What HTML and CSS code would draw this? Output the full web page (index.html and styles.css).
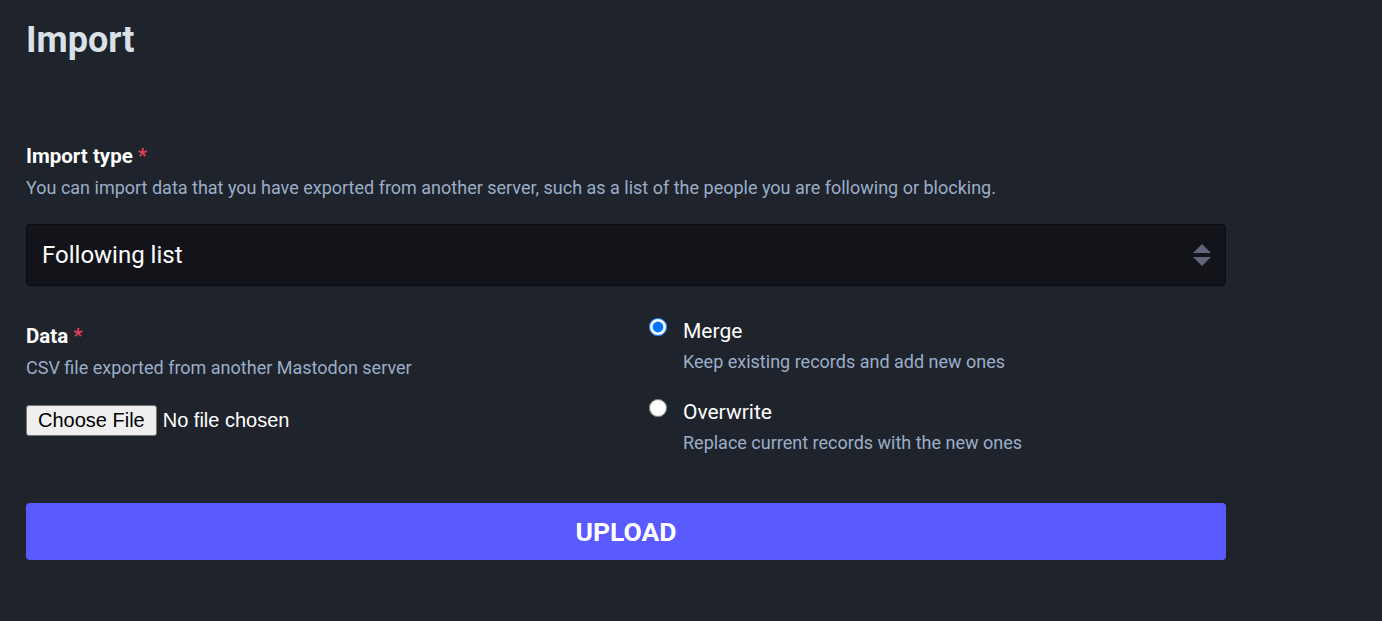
FILE: index.html
```html
<!DOCTYPE html>
<html lang="en">
<head>
<meta charset="utf-8">
<title>Import</title>
<link rel="stylesheet" href="styles.css">
</head>
<body>
<main class="page">
  <h2 class="title">Import</h2>
  <form class="form">
    <div class="field field-type">
      <div class="label">Import type <abbr class="req">*</abbr></div>
      <div class="hint">You can import data that you have exported from another server, such as a list of the people you are following or blocking.</div>
      <div class="select-wrap">
        <select class="select">
          <option>Following list</option>
        </select>
        <span class="arrows">
          <svg width="20" height="24" viewBox="0 0 20 24"><path d="M10 1 L19 10 H1 Z" fill="#5f6478"/><path d="M1 14 H19 L10 23 Z" fill="#5f6478"/></svg>
        </span>
      </div>
    </div>
    <div class="columns">
      <div class="col">
        <div class="label">Data <abbr class="req">*</abbr></div>
        <div class="hint">CSV file exported from another Mastodon server</div>
        <div class="file">
          <span class="file-btn">Choose File</span>
          <span class="file-text">No file chosen</span>
        </div>
      </div>
      <div class="col radios">
        <label class="radio">
          <input type="radio" name="mode" checked>
          <span class="radio-body">
            <span class="radio-label">Merge</span>
            <span class="radio-hint">Keep existing records and add new ones</span>
          </span>
        </label>
        <label class="radio">
          <input type="radio" name="mode">
          <span class="radio-body">
            <span class="radio-label">Overwrite</span>
            <span class="radio-hint">Replace current records with the new ones</span>
          </span>
        </label>
      </div>
    </div>
    <button type="button" class="upload">UPLOAD</button>
  </form>
</main>
</body>
</html>
```
FILE: styles.css
```css
html, body {
  margin: 0;
  padding: 0;
  background: #1f232b;
  height: 100%;
}
body {
  font-family: Roboto, "Noto Sans", sans-serif;
  color: #ffffff;
}
.page {
  padding: 0 26px;
  width: 1200px;
}
.title {
  margin: 0;
  padding-top: 18px;
  font-size: 36px;
  line-height: 44px;
  font-weight: 700;
  color: #d9e1e8;
}
.form {
  margin-top: 82px;
}
.label {
  font-size: 20.5px;
  line-height: 24px;
  font-weight: 700;
  color: #ffffff;
}
.req {
  color: #df405a;
  text-decoration: none;
  font-weight: 700;
}
.hint {
  margin-top: 9px;
  font-size: 18px;
  line-height: 22px;
  color: #9baec8;
}
.select-wrap {
  position: relative;
  margin-top: 25px;
}
.select {
  display: block;
  width: 100%;
  height: 62px;
  appearance: none;
  -webkit-appearance: none;
  background: #131419;
  border: 1px solid #0a0b0e;
  border-radius: 4px;
  color: #ffffff;
  font-family: Roboto, "Noto Sans", sans-serif;
  font-size: 24px;
  padding: 0 15px;
  outline: none;
}
.arrows {
  position: absolute;
  right: 14px;
  top: 19px;
  display: flex;
}
.columns {
  display: grid;
  grid-template-columns: 1fr 1fr;
  column-gap: 36px;
  margin-top: 33px;
}
.columns .col:first-child {
  padding-top: 5px;
}
.file {
  display: flex;
  align-items: center;
  margin-top: 26px;
  font-family: "Liberation Sans", Arial, sans-serif;
  font-size: 20px;
}
.file-btn {
  display: inline-block;
  box-sizing: border-box;
  height: 31px;
  line-height: 29px;
  padding: 0 11px;
  background: #efefef;
  color: #000;
  border: 1px solid #767676;
  border-radius: 3px;
}
.file-text {
  margin-left: 6px;
  color: #ffffff;
}
.radios {
  display: flex;
  flex-direction: column;
  gap: 27px;
}
.radio {
  display: flex;
  align-items: flex-start;
}
.radio input {
  margin: -1px 0 0 5px;
  width: 18px;
  height: 18px;
  flex: none;
}
.radio-body {
  display: flex;
  flex-direction: column;
  margin-left: 16px;
}
.radio-label {
  font-size: 21px;
  line-height: 24px;
  color: #ffffff;
}
.radio-hint {
  margin-top: 8px;
  font-size: 18px;
  line-height: 22px;
  color: #9baec8;
}
.upload {
  display: block;
  width: 100%;
  height: 57px;
  margin-top: 49px;
  background: #595aff;
  border: 0;
  border-radius: 4px;
  color: #ffffff;
  font-family: Roboto, "Noto Sans", sans-serif;
  font-size: 26.5px;
  font-weight: 700;
}
```
